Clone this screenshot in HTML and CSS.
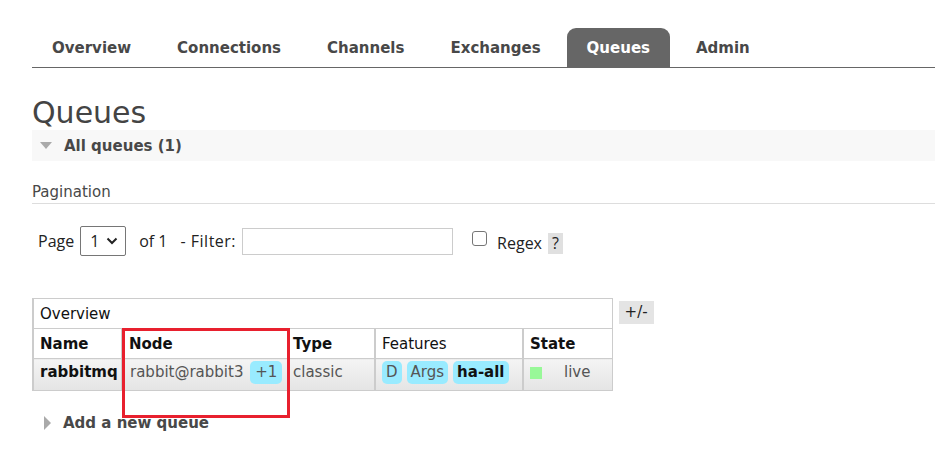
FILE: index.html
```html
<!DOCTYPE html>
<html>
<head>
<meta charset="utf-8">
<link rel="stylesheet" href="styles.css">
</head>
<body>
<div class="page">
  <nav class="tabs">
    <a class="tab">Overview</a>
    <a class="tab">Connections</a>
    <a class="tab">Channels</a>
    <a class="tab">Exchanges</a>
    <a class="tab active">Queues</a>
    <a class="tab">Admin</a>
  </nav>

  <h1 class="title">Queues</h1>

  <div class="section-head">
    <span class="tri-down"></span>
    <span class="section-label">All queues (1)</span>
  </div>

  <div class="pagination-title">Pagination</div>

  <div class="pager">
    <span class="lbl">Page</span>
    <span class="select">1<svg width="12" height="8" viewBox="0 0 12 8"><path d="M1.5 1.5 L6 6 L10.5 1.5" fill="none" stroke="#222" stroke-width="2"/></svg></span>
    <span class="lbl of">of 1</span>
    <span class="lbl filter">- Filter:</span>
    <span class="input"></span>
    <span class="checkbox"></span>
    <span class="lbl regex">Regex</span>
    <span class="help">?</span>
  </div>

  <div class="table-wrap">
    <table class="list">
      <colgroup>
        <col class="w-name">
        <col class="w-node">
        <col class="w-type">
        <col class="w-feat">
        <col class="w-state">
      </colgroup>
      <tr class="group">
        <th colspan="5" class="group-cell">Overview</th>
      </tr>
      <tr class="head">
        <th>Name</th>
        <th>Node</th>
        <th class="tight">Type</th>
        <th class="light">Features</th>
        <th>State</th>
      </tr>
      <tr class="row">
        <td class="strong">rabbitmq</td>
        <td class="node">rabbit@rabbit3 <span class="badge plus">+1</span></td>
        <td class="muted tight">classic</td>
        <td class="feats"><span class="badge">D</span><span class="badge">Args</span><span class="badge bold">ha-all</span></td>
        <td><span class="state"><span class="dot"></span><span class="muted">live</span></span></td>
      </tr>
    </table>
    <span class="plusminus">+/-</span>
    <div class="highlight"></div>
  </div>

  <div class="add">
    <span class="tri-right"></span>
    <span class="section-label">Add a new queue</span>
  </div>
</div>
</body>
</html>
```

FILE: styles.css
```css
html, body {
  margin: 0;
  padding: 0;
  background: #fff;
}
body {
  font-family: "DejaVu Sans", Verdana, sans-serif;
  color: #484848;
  font-size: 15px;
}
.page {
  padding: 28px 0 0 32px;
}
.tabs {
  display: flex;
  border-bottom: 1px solid #666;
  height: 39px;
}
.tab {
  font-family: "DejaVu Sans", Verdana, sans-serif;
  font-weight: 700;
  font-size: 15px;
  color: #484848;
  padding: 1px 20px 0;
  margin-right: 6px;
  line-height: 38px;
  border-radius: 9px 9px 0 0;
}
.tab.active {
  background: #666;
  color: #fff;
}
.title {
  font-weight: normal;
  font-size: 30px;
  color: #444;
  margin: 28px 0 0 0;
  line-height: 34px;
  height: 34px;
}
.section-head {
  height: 31px;
  background: #f8f8f8;
  display: flex;
  align-items: center;
  gap: 12px;
  padding-left: 8px;
}
.tri-down {
  width: 0; height: 0;
  border-left: 6px solid transparent;
  border-right: 6px solid transparent;
  border-top: 7px solid #aaa;
}
.tri-right {
  width: 0; height: 0;
  border-top: 7px solid transparent;
  border-bottom: 7px solid transparent;
  border-left: 7px solid #aaa;
}
.section-label {
  font-weight: bold;
  font-size: 15px;
  color: #484848;
}
.pagination-title {
  margin-top: 23px;
  font-size: 15px;
  line-height: 17px;
  color: #484848;
  padding-bottom: 2px;
  border-bottom: 1px solid #ddd;
}
.pager {
  display: flex;
  align-items: center;
  margin-top: 22px;
  padding-left: 6px;
  font-family: "Open Sans", "Noto Sans", sans-serif;
  font-size: 16px;
  color: #222;
  height: 30px;
}
.lbl { margin-right: 6px; }
.of { margin-left: 13px; margin-right: 13px; }
.filter { margin-right: 6px; letter-spacing: 0.5px; }
.select {
  border: 1px solid #767676;
  border-radius: 2px;
  box-sizing: border-box;
  width: 46px;
  height: 30px;
  display: flex;
  align-items: center;
  justify-content: space-between;
  padding: 0 7px 0 9px;
  color: #222;
  font-size: 16px;
}
.input {
  width: 211px;
  height: 27px;
  border: 1px solid #ccc;
  box-sizing: border-box;
}
.checkbox {
  width: 13px;
  height: 13px;
  border: 1px solid #767676;
  border-radius: 3px;
  margin-left: 19px;
  margin-top: -6px;
}
.regex {
  margin-left: 10px;
  margin-top: 4px;
}
.help {
  background: #e0e0e0;
  padding: 0 4px;
  height: 21px;
  line-height: 21px;
  margin-top: 4px;
}
.table-wrap {
  position: relative;
  margin-top: 42px;
  display: flex;
  align-items: flex-start;
}
.list {
  border-collapse: collapse;
  width: 579px;
  table-layout: fixed;
}
.w-name { width: 89px; }
.w-node { width: 166px; }
.w-type { width: 87px; }
.w-feat { width: 148px; }
.w-state { width: 89px; }
.list th, .list td {
  border: 1px solid #ccc;
  border-left-width: 2px;
  text-align: left;
  color: #111;
  font-size: 15px;
  padding: 0 6px;
  white-space: nowrap;
  overflow: hidden;
}
.list .tight { padding-left: 4px; }
.group-cell {
  font-weight: normal;
  height: 29px;
}
.head th {
  height: 29px;
  font-weight: bold;
}
.head th.light { font-weight: normal; }
.list .row td {
  height: 32px;
  box-sizing: border-box;
  background: linear-gradient(#f4f4f4, #e4e4e4);
  vertical-align: top;
  padding-top: 5px;
  line-height: 17px;
}
.list .row td.node { padding-left: 7px; }
.row td.strong { font-weight: bold; }
.list td.muted, .list td.node, .muted { color: #555; }
.badge {
  display: inline-block;
  background: #99ebff;
  color: #555;
  border-radius: 5px;
  padding: 3px 4px;
  line-height: 17px;
  margin-top: -3px;
  vertical-align: top;
}
.plus { margin-left: 2px; padding: 3px 5px; }
.feats .badge { margin-right: 5px; }
.badge.bold { font-weight: bold; color: #111; }
.state {
  display: flex;
  align-items: center;
}
.dot {
  width: 12px;
  height: 12px;
  background: #98f898;
  margin-right: 22px;
}
.plusminus {
  margin-left: 6px;
  margin-top: 3px;
  background: #e4e4e4;
  padding: 3px 6px;
  font-size: 15px;
  line-height: 17px;
  color: #222;
}
.highlight {
  position: absolute;
  left: 90px;
  top: 30px;
  width: 162px;
  height: 84px;
  border: 3px solid #e8202e;
  pointer-events: none;
}
.add {
  display: flex;
  align-items: center;
  gap: 12px;
  padding-left: 12px;
  margin-top: 23px;
}
```
